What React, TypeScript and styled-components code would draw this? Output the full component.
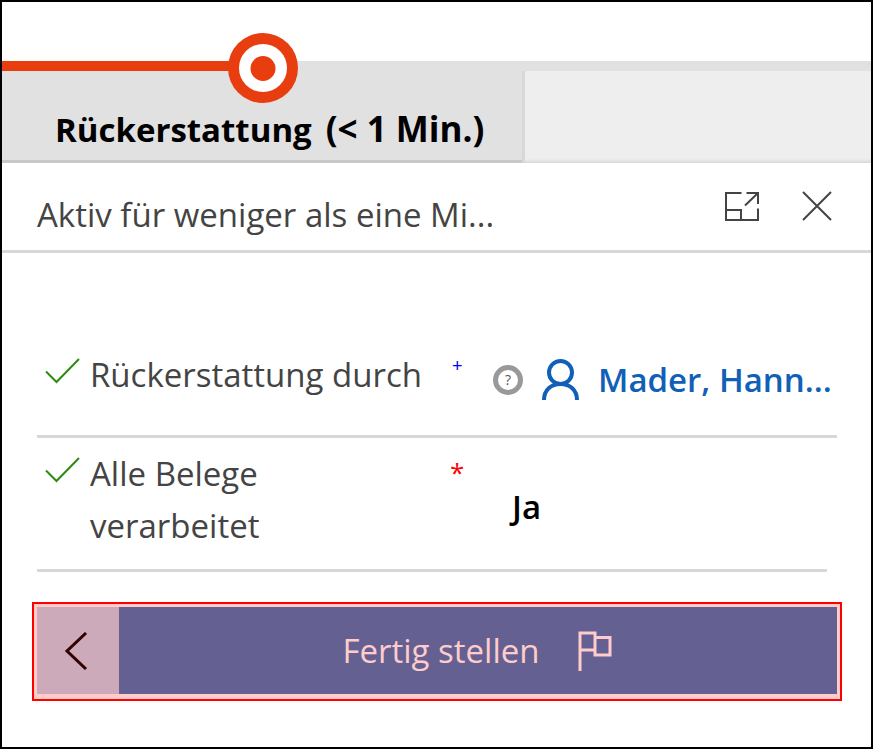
import React from "react";
import styled, { createGlobalStyle } from "styled-components";

const GlobalStyle = createGlobalStyle`
  *, *::before, *::after { box-sizing: border-box; }
  body {
    margin: 0;
    background: #fff;
    color: #444;
    font-family: "Open Sans", "Noto Sans", sans-serif;
    font-size: 33px;
    line-height: 52px;
  }
  button { font: inherit; cursor: pointer; }
`;

const Window = styled.main`
  min-height: 100vh;
  padding-top: 59px;
  border: 2px solid #000;
  overflow: hidden;
`;

const StageBar = styled.section`
  display: flex;
  height: 102px;
  background: linear-gradient(#e1e1e1 10px, #eee 10px, #eee 98px, #d8d8d8);
`;

const Stage = styled.div`
  position: relative;
  flex: 0 0 calc(60% + 2px);
  min-width: 0;
  padding: 42px 0 0 53px;
  background: linear-gradient(#e1e1e1 99px, #c8c8c8 99px);

  &::before {
    content: "";
    position: absolute;
    top: 0;
    left: 0;
    width: 50%;
    height: 10px;
    background: #e83d0f;
  }

  &::after {
    content: "";
    position: absolute;
    top: 10px;
    right: 0;
    bottom: 0;
    width: 3px;
    background: #d8d8d8;
  }
`;

const StageTitle = styled.h1`
  display: flex;
  align-items: baseline;
  gap: 14px;
  margin: 0;
  color: #000;
  font-size: 33px;
  line-height: 52px;
  font-weight: 700;
  white-space: nowrap;
`;

const StageTime = styled.span`
  font-size: 35px;
`;

const StageMarker = styled.svg`
  position: absolute;
  top: -28px;
  left: 50%;
  width: 70px;
  height: 70px;
  margin-left: -36px;
`;

const PanelHeader = styled.header`
  display: flex;
  align-items: center;
  height: 90px;
  padding: 0 38px 0 35px;
  border-bottom: 3px solid #d8d8d8;
`;

const PanelTitle = styled.h2`
  flex: 1;
  margin: 0;
  padding-top: 16px;
  font-size: 33px;
  line-height: 52px;
  font-weight: 400;
  white-space: nowrap;
`;

const IconButton = styled.button`
  display: flex;
  margin-left: 41px;
  padding: 0 0 2px;
  border: 0;
  background: none;
  color: #444;
`;

const Form = styled.div`
  padding: 86px 34px 30px 35px;
`;

const Field = styled.div<{ $inset?: boolean }>`
  display: grid;
  grid-template-columns: 53px 360px 43px minmax(0, 1fr);
  margin-right: ${(p) => (p.$inset ? 10 : 0)}px;
  padding: 10px 0 ${(p) => (p.$inset ? 17 : 24)}px;
  border-bottom: 3px solid #d8d8d8;
`;

const Check = styled.svg`
  width: 36px;
  height: 27px;
  margin: 8px 0 0 8px;
`;

const Label = styled.span<{ $wrap?: boolean }>`
  max-width: ${(p) => (p.$wrap ? "240px" : "none")};
`;

const Mark = styled.span<{ $required?: boolean }>`
  padding-left: ${(p) => (p.$required ? 0 : 2)}px;
  color: ${(p) => (p.$required ? "#f00" : "#00f")};
  font-family: ${(p) => (p.$required ? '"Open Sans"' : '"Liberation Sans"')}, sans-serif;
  font-size: ${(p) => (p.$required ? 26 : 18)}px;
  line-height: ${(p) => (p.$required ? 48 : 34)}px;
`;

const Value = styled.div`
  display: flex;
  align-items: center;
  height: 62px;
`;

const Help = styled.button`
  flex: none;
  width: 30px;
  height: 30px;
  padding: 0;
  border: 5px solid #999;
  border-radius: 50%;
  background: #fff;
  color: #555;
  && {
    font-size: 14px;
    line-height: 20px;
  }
`;

const Person = styled.svg`
  flex: none;
  width: 38px;
  height: 42px;
  margin: 0 19px 0 18px;
`;

const UserLink = styled.a`
  color: #1160b7;
  font-weight: 600;
  text-decoration: none;
  white-space: nowrap;
`;

const Answer = styled.span`
  padding: 33px 0 0 19px;
  color: #000;
  font-weight: 600;
  line-height: 52px;
`;

const Actions = styled.footer`
  display: flex;
  margin: 0 29px 0 30px;
  padding: 3px 3px 5px;
  border: 2px solid #f00;
  background: #ffcccb;
`;

const BackButton = styled.button`
  display: flex;
  align-items: center;
  justify-content: center;
  width: 82px;
  height: 87px;
  padding: 0 4px 0 0;
  border: 0;
  background: #ccaab9;
`;

const FinishButton = styled.button`
  display: flex;
  flex: 1;
  align-items: center;
  justify-content: center;
  gap: 38px;
  height: 87px;
  padding: 0 2px 0 0;
  border: 0;
  background: #646192;
  color: #ffcccb;
`;

const CheckIcon = () => (
  <Check viewBox="0 0 36 27" aria-hidden="true">
    <path d="M1 14.5 11.5 25 34 2" fill="none" stroke="#2f8a10" strokeWidth="2" />
  </Check>
);

export default function App() {
  return (
    <>
      <GlobalStyle />
      <Window>
        <StageBar>
          <Stage>
            <StageMarker viewBox="0 0 70 70" aria-hidden="true">
              <circle cx="35" cy="35" r="35" fill="#e83d0f" />
              <circle cx="35" cy="35" r="24" fill="#fff" />
              <circle cx="35" cy="35.5" r="12.5" fill="#e83d0f" />
            </StageMarker>
            <StageTitle>
              Rückerstattung <StageTime>{"(< 1 Min.)"}</StageTime>
            </StageTitle>
          </Stage>
        </StageBar>
        <PanelHeader>
          <PanelTitle>Aktiv für weniger als eine Mi...</PanelTitle>
          <IconButton type="button" aria-label="Andocken aufheben">
            <svg width="36" height="30" viewBox="0 0 36 30" fill="none" stroke="currentColor" strokeWidth="2">
              <path d="M17.500 2H2V29H34V17.500M2 19H17V29M22.500 2H34V13M34 2 21 14.500" />
            </svg>
          </IconButton>
          <IconButton type="button" aria-label="Schließen">
            <svg width="32" height="30" viewBox="0 0 32 30" fill="none" stroke="currentColor" strokeWidth="2">
              <path d="M2 1 30 29M30 1 2 29" />
            </svg>
          </IconButton>
        </PanelHeader>
        <Form>
          <Field>
            <CheckIcon />
            <Label>Rückerstattung durch</Label>
            <Mark>+</Mark>
            <Value>
              <Help type="button" aria-label="Hilfe">?</Help>
              <Person viewBox="0 0 38 42" fill="none" stroke="#1160b7" strokeWidth="4" aria-hidden="true">
                <circle cx="19.500" cy="13.500" r="11.500" />
                <path d="M3 41C3 31 10 25 19.500 25S36 31 36 41" />
              </Person>
              <UserLink href="#">Mader, Hann...</UserLink>
            </Value>
          </Field>
          <Field $inset>
            <CheckIcon />
            <Label $wrap>Alle Belege verarbeitet</Label>
            <Mark $required>*</Mark>
            <Answer>Ja</Answer>
          </Field>
        </Form>
        <Actions>
          <BackButton type="button" aria-label="Zurück">
            <svg width="24" height="38" viewBox="0 0 24 38" fill="none" stroke="#300" strokeWidth="3">
              <path d="M22 1 3 19 22 37" />
            </svg>
          </BackButton>
          <FinishButton type="button">
            Fertig stellen
            <svg width="34" height="40" viewBox="0 0 34 40" fill="none" stroke="currentColor" strokeWidth="3" aria-hidden="true">
              <path d="M2 40V2H17V19H2M17 6.500H32V24H17V19" />
            </svg>
          </FinishButton>
        </Actions>
      </Window>
    </>
  );
}
